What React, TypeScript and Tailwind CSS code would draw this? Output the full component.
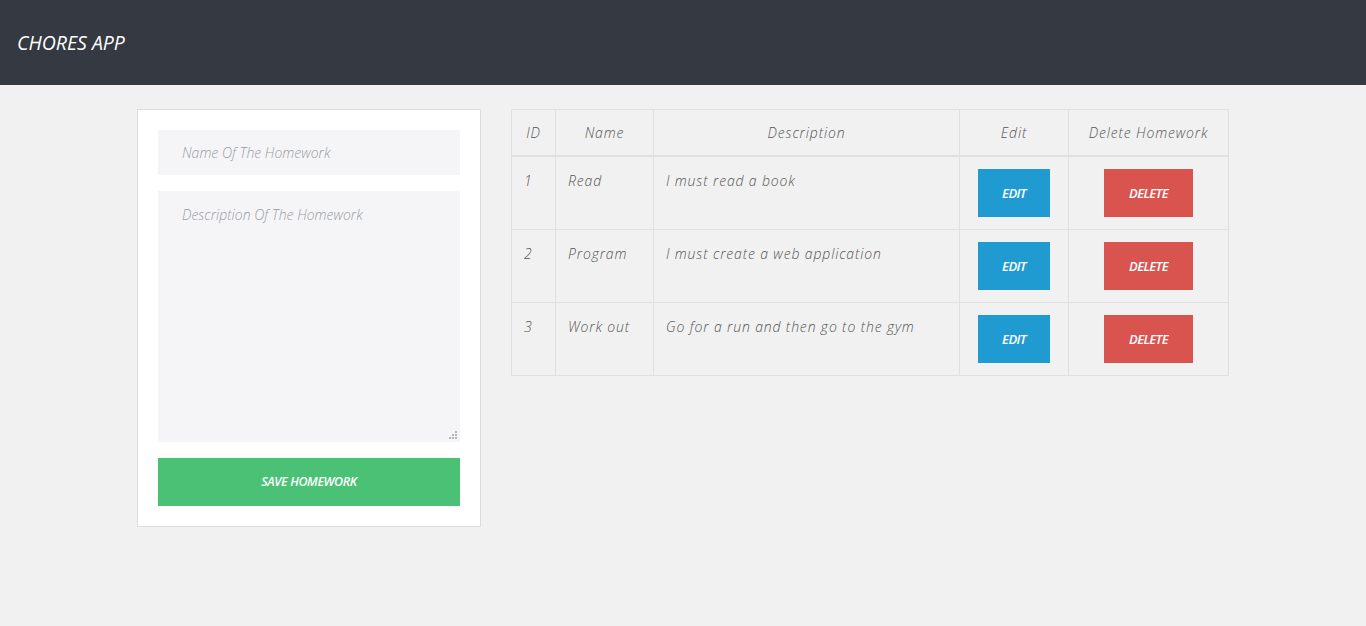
const chores = [
  { id: 1, name: 'Read', description: 'I must read a book' },
  { id: 2, name: 'Program', description: 'I must create a web application' },
  { id: 3, name: 'Work out', description: 'Go for a run and then go to the gym' },
]

const font = { fontFamily: '"Open Sans", "Liberation Sans", sans-serif' }

function ResizeGrip() {
  return (
    <svg className="absolute right-[3px] bottom-[3px]" width="8" height="8" viewBox="0 0 8 8" fill="#b5b5b8">
      <rect x="6" y="0" width="2" height="2" />
      <rect x="3" y="3" width="2" height="2" />
      <rect x="6" y="3" width="2" height="2" />
      <rect x="0" y="6" width="2" height="2" />
      <rect x="3" y="6" width="2" height="2" />
      <rect x="6" y="6" width="2" height="2" />
    </svg>
  )
}

function HomeworkForm() {
  return (
    <div className="w-[344px] shrink-0 bg-white border border-[#dddddd] p-5 flex flex-col gap-4">
      <input
        className="h-[45px] w-full bg-[#f5f5f7] px-6 text-sm font-light italic text-[#555] placeholder:text-[#9a9ca3] outline-none"
        placeholder="Name Of The Homework"
      />
      <div className="relative">
        <textarea
          className="block h-[251px] w-full resize-none bg-[#f5f5f7] px-6 pt-[14px] pb-3 text-sm font-light italic text-[#555] placeholder:text-[#9a9ca3] outline-none"
          placeholder="Description Of The Homework"
        />
        <ResizeGrip />
      </div>
      <button className="h-12 w-full bg-[#4bc175] text-white text-[12.5px] font-semibold italic tracking-[-0.4px]">
        SAVE HOMEWORK
      </button>
    </div>
  )
}

function ChoresTable() {
  const th = 'border border-[#e0e0e0] border-b-2 h-[46px] pt-[2px] text-sm font-light italic tracking-[0.85px] text-[#555] text-center'
  const td = 'border border-[#e0e0e0] px-3 py-3 align-top text-sm font-light italic tracking-[0.85px] text-[#555]'
  return (
    <table className="w-[718px] table-fixed border-collapse">
      <thead>
        <tr>
          <th className={`${th} w-[44px]`}>ID</th>
          <th className={`${th} w-[98px]`}>Name</th>
          <th className={`${th} w-[306px]`}>Description</th>
          <th className={`${th} w-[109px]`}>Edit</th>
          <th className={th}>Delete Homework</th>
        </tr>
      </thead>
      <tbody>
        {chores.map((c) => (
          <tr key={c.id} className="h-[73px]">
            <td className={td}>
              <div className="leading-[24px]">{c.id}</div>
            </td>
            <td className={td}>
              <div className="leading-[24px]">{c.name}</div>
            </td>
            <td className={td}>
              <div className="leading-[24px]">{c.description}</div>
            </td>
            <td className={`${td} text-center`}>
              <button className="w-[72px] h-12 pt-[2px] bg-[#1f9bd1] text-white text-[13px] font-semibold italic tracking-[-0.6px]">
                EDIT
              </button>
            </td>
            <td className={`${td} text-center`}>
              <button className="w-[89px] h-12 pt-[2px] bg-[#d9534f] text-white text-[13px] font-semibold italic tracking-[-0.6px]">
                DELETE
              </button>
            </td>
          </tr>
        ))}
      </tbody>
    </table>
  )
}

export default function App() {
  return (
    <div className="min-h-[626px] bg-[#f1f1f1]" style={font}>
      <header className="h-[85px] bg-[#343942] flex items-center px-[17px]">
        <h1 className="text-[19.5px] italic text-white">CHORES APP</h1>
      </header>
      <main className="w-[1092px] mx-auto pt-6 flex items-start gap-[30px]">
        <HomeworkForm />
        <ChoresTable />
      </main>
    </div>
  )
}
